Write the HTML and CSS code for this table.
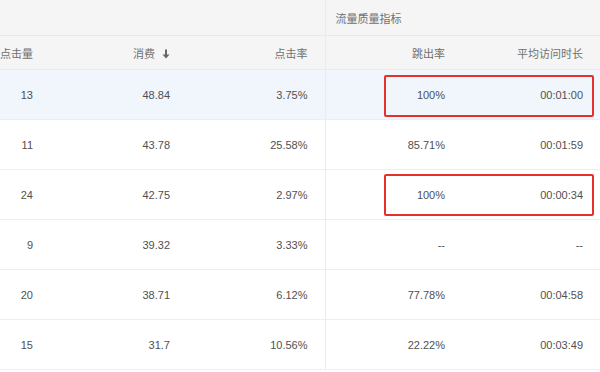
FILE: index.html
```html
<!DOCTYPE html>
<html>
<head>
<meta charset="utf-8">
<link rel="stylesheet" href="styles.css">
</head>
<body>
<div class="wrap">
<table class="grid">
  <colgroup>
    <col class="c1"><col class="c2"><col class="c3"><col class="c4"><col class="c5">
  </colgroup>
  <thead>
    <tr class="group">
      <th colspan="3" class="blank"></th>
      <th colspan="2" class="grouplabel">流量质量指标</th>
    </tr>
    <tr class="heads">
      <th class="first">点击量</th>
      <th>消费 <svg class="sort" width="8" height="10" viewBox="0 0 8 10"><path d="M4 0.5V8" stroke="#666" stroke-width="2"/><path d="M0.5 5.5L4 9.5L7.5 5.5Z" fill="#666"/></svg></th>
      <th class="div">点击率</th>
      <th>跳出率</th>
      <th>平均访问时长</th>
    </tr>
  </thead>
  <tbody>
    <tr class="hl"><td>13</td><td>48.84</td><td class="div">3.75%</td><td>100%</td><td>00:01:00</td></tr>
    <tr><td>11</td><td>43.78</td><td class="div">25.58%</td><td>85.71%</td><td>00:01:59</td></tr>
    <tr><td>24</td><td>42.75</td><td class="div">2.97%</td><td>100%</td><td>00:00:34</td></tr>
    <tr><td>9</td><td>39.32</td><td class="div">3.33%</td><td>--</td><td>--</td></tr>
    <tr><td>20</td><td>38.71</td><td class="div">6.12%</td><td>77.78%</td><td>00:04:58</td></tr>
    <tr><td>15</td><td>31.7</td><td class="div">10.56%</td><td>22.22%</td><td>00:03:49</td></tr>
  </tbody>
</table>
<div class="mark mark1"></div>
<div class="mark mark2"></div>
</div>
</body>
</html>
```
FILE: styles.css
```css
html, body {
  margin: 0;
  padding: 0;
  background: #fff;
}
.wrap {
  position: relative;
  width: 600px;
  height: 372px;
  overflow: hidden;
  font-family: "Liberation Sans", Arial, "Noto Sans CJK SC", sans-serif;
  font-size: 11px;
  color: #505050;
}
.grid {
  border-collapse: collapse;
  table-layout: fixed;
  width: 600px;
}
.c1 { width: 50px; }
.c2 { width: 137px; }
.c3 { width: 138px; }
.c4 { width: 137px; }
.c5 { width: 138px; }
th, td {
  padding: 0 17px 0 0;
  text-align: right;
  white-space: nowrap;
  font-weight: normal;
}
thead th {
  background: #f5f5f5;
  color: #707070;
}
.group th {
  height: 35px;
  border-bottom: 1px solid #e9e9e9;
  vertical-align: middle;
}
.group .grouplabel {
  text-align: left;
  padding-left: 10px;
  border-left: 1px solid #ebebeb;
}
.heads th {
  height: 33px;
  border-bottom: 1px solid #eaeaea;
}
.sort {
  vertical-align: -1px;
  margin-left: 4px;
}
td {
  height: 49px;
  border-bottom: 1px solid #eeeeee;
}
.div {
  border-right: 1px solid #ebebeb;
}
tr.hl td {
  background: #f1f5fc;
}
.mark {
  position: absolute;
  left: 384px;
  width: 206px;
  height: 38px;
  border: 2px solid #e6302b;
  border-radius: 2px;
}
.mark1 { top: 75px; }
.mark2 { top: 174px; }
```
